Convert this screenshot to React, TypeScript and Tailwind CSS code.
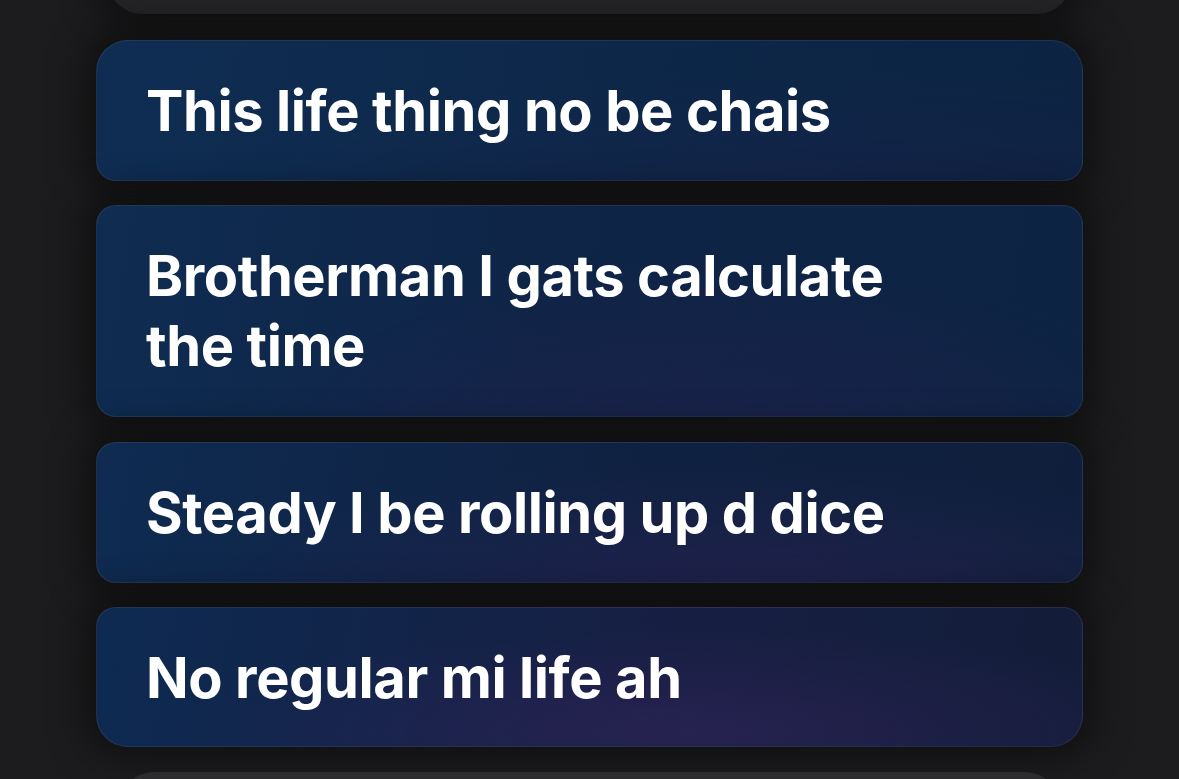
const rows: { text: React.ReactNode; tint: string; extra: string }[] = [
  {
    text: 'This life thing no be chais',
    tint: 'bg-[radial-gradient(ellipse_at_75%_140%,rgba(40,30,80,0.3),transparent_60%),linear-gradient(100deg,#0f2d53_0%,#0d2748_55%,#0c2342_100%)]',
    extra: 'pb-[34px]',
  },
  {
    text: (
      <>
        Brotherman I gats calculate
        <br />
        the time
      </>
    ),
    tint: 'bg-[radial-gradient(ellipse_at_62%_115%,rgba(42,32,80,0.5),transparent_55%),linear-gradient(100deg,#0f2c51_0%,#0e2446_50%,#0c2343_100%)]',
    extra: 'pb-[35px] mb-[1px]',
  },
  {
    text: 'Steady I be rolling up d dice',
    tint: 'bg-[radial-gradient(ellipse_at_65%_110%,rgba(48,34,88,0.55),transparent_60%),linear-gradient(100deg,#0f2b51_0%,#0f2141_55%,#0f1f3b_100%)]',
    extra: 'pb-[34px]',
  },
  {
    text: 'No regular mi life ah',
    tint: 'bg-[radial-gradient(ellipse_at_60%_90%,rgba(52,36,92,0.55),transparent_60%),linear-gradient(100deg,#0e2a51_0%,#161f43_55%,#131d39_100%)]',
    extra: 'pb-[33px]',
  },
]

function Row({
  text,
  tint,
  extra,
  first,
  last,
}: {
  text: React.ReactNode
  tint: string
  extra: string
  first?: boolean
  last?: boolean
}) {
  return (
    <div
      className={[
        'pl-[49px] pr-[48px] pt-[35px] border border-white/[0.07] shadow-[0_0_36px_14px_rgba(0,0,0,0.4)]',
        first ? 'rounded-tl-[32px] rounded-tr-[32px]' : 'rounded-tl-[20px] rounded-tr-[20px]',
        last ? 'rounded-bl-[32px] rounded-br-[32px]' : 'rounded-bl-[20px] rounded-br-[20px]',
        extra,
        tint,
      ].join(' ')}
    >
      <p className="text-white font-bold text-[56px] leading-[70px] tracking-[-0.4px]">
        {text}
      </p>
    </div>
  )
}

function App() {
  return (
    <div
      className="h-[779px] overflow-hidden bg-[#1c1c1e]"
      style={{ fontFamily: 'Inter, "Noto Sans", sans-serif' }}
    >
      <div className="flex flex-col px-[96px]">
        <div className="-mt-[86px] mx-[12px] h-[100px] rounded-b-[34px] rounded-t-[20px] bg-[#242427] shadow-[0_0_36px_14px_rgba(0,0,0,0.4)]" />
        <div className="flex flex-col gap-[24px] mt-[26px]">
          {rows.map((r, i) => (
            <Row
              key={i}
              text={r.text}
              tint={r.tint}
              extra={r.extra}
              first={i === 0}
              last={i === rows.length - 1}
            />
          ))}
          <div className="mx-[24px] mt-[1px] h-[100px] rounded-t-[34px] bg-[#2c2c2e]" />
        </div>
      </div>
    </div>
  )
}

export default App
